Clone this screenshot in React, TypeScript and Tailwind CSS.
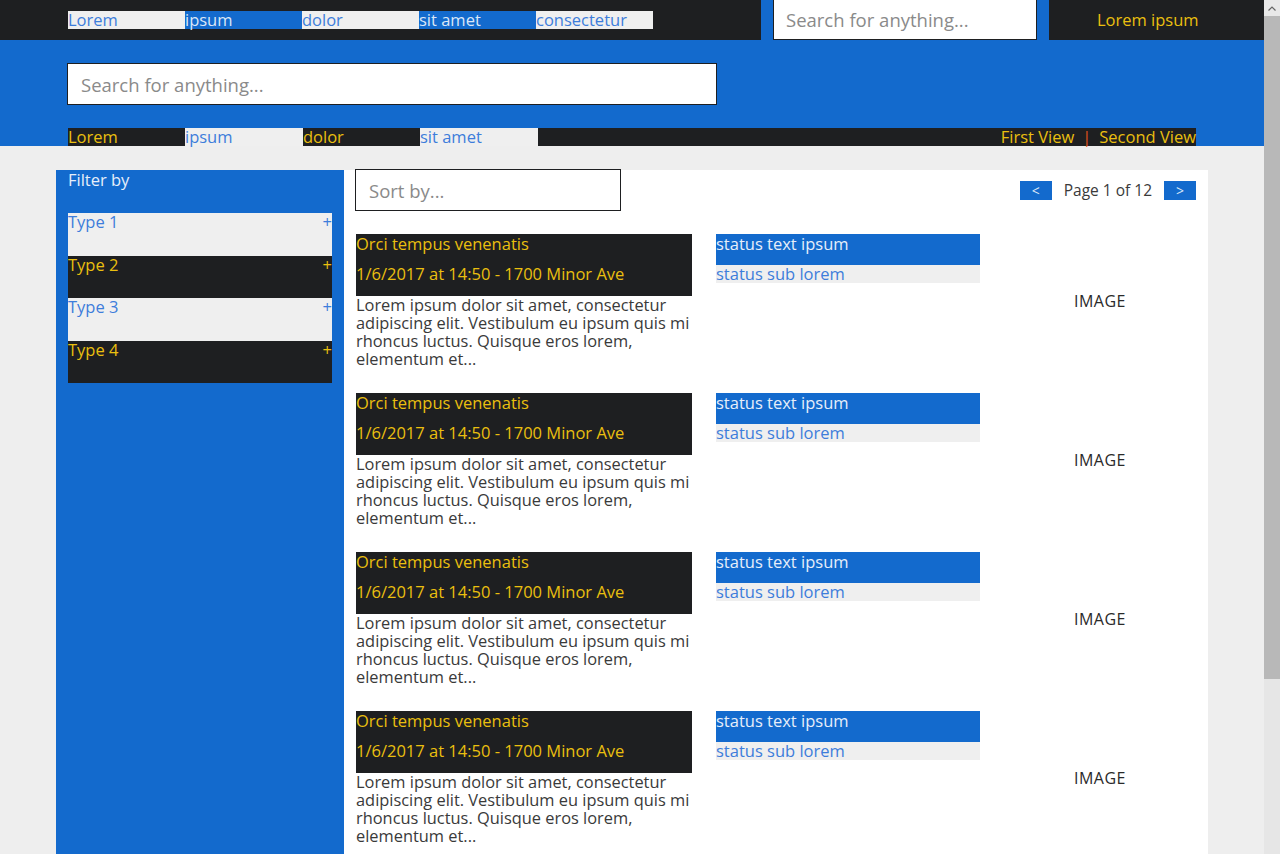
import React from "react";

const topNav = [
  { label: "Lorem", dark: false },
  { label: "ipsum", dark: true },
  { label: "dolor", dark: false },
  { label: "sit amet", dark: true },
  { label: "consectetur", dark: false },
];

const tabs = [
  { label: "Lorem", active: true },
  { label: "ipsum", active: false },
  { label: "dolor", active: true },
  { label: "sit amet", active: false },
];

const types = ["Type 1", "Type 2", "Type 3", "Type 4"];

const cards = [1, 2, 3, 4, 5];

function Card() {
  return (
    <div className="flex">
      <div className="w-[336px] shrink-0">
        <div className="h-[62px] bg-[#1e1f21] text-[#eabf0f]">
          <p className="text-[16.5px] leading-[20px]">Orci tempus venenatis</p>
          <p className="text-[16.5px] leading-[20px] mt-[10px]">1/6/2017 at 14:50 - 1700 Minor Ave</p>
        </div>
        <p className="text-[16.4px] leading-[18px] text-[#3a3a3a] whitespace-nowrap">
          Lorem ipsum dolor sit amet, consectetur
          <br />
          adipiscing elit. Vestibulum eu ipsum quis mi
          <br />
          rhoncus luctus. Quisque eros lorem,
          <br />
          elementum et...
        </p>
      </div>
      <div className="w-[264px] shrink-0 ml-6">
        <div className="h-[31px] bg-[#136acd] text-[#e6eefa] text-[16.5px] leading-[20px]">status text ipsum</div>
        <div className="h-[18px] bg-[#efefef] text-[#3d7ddb] text-[16.5px] leading-[18px]">status sub lorem</div>
      </div>
      <div className="flex-1 pl-6 flex items-center justify-center text-[16px] tracking-[0.5px] text-[#2a2a2a]">IMAGE</div>
    </div>
  );
}

function FakeScrollbar() {
  // the reference shows a classic browser scrollbar on the right edge
  return (
    <div aria-hidden className="fixed right-0 top-0 w-4 h-screen bg-[#e6e6e6] flex flex-col">
      <div className="h-4 bg-[#e8e8e8] flex items-center justify-center">
        <svg width="8" height="5" viewBox="0 0 8 5" fill="none" stroke="#666" strokeWidth="1.2">
          <path d="M0.5 4.5 L4 1 L7.5 4.5" />
        </svg>
      </div>
      <div className="h-[663px] bg-[#b8b8b8]" />
    </div>
  );
}

export default function App() {
  return (
    <div className="min-h-screen bg-[#eeeeee] font-['Open_Sans',sans-serif]">
      <div className="mr-4">
        {/* Header */}
        <div className="bg-[#136acd]">
          <div className="flex h-10">
            <div className="w-[761px] bg-[#1e1f21] pl-[68px] pt-[11px]">
              <div className="flex">
                {topNav.map((n) => (
                  <div
                    key={n.label}
                    className={
                      n.dark
                        ? "w-[117px] h-[18px] bg-[#136acd] text-[#dbe7f8] text-[16.5px] leading-[18px]"
                        : "w-[117px] h-[18px] bg-[#efefef] text-[#3d7ddb] text-[16.5px] leading-[18px]"
                    }
                  >
                    {n.label}
                  </div>
                ))}
              </div>
            </div>
            <div className="px-3">
              <input
                className="w-[264px] h-[41px] -mt-px bg-white border border-[#1e1f21] pl-[12px] text-[18.5px] outline-none placeholder:text-[#8a8a8a]"
                placeholder="Search for anything..."
              />
            </div>
            <div className="flex-1 bg-[#1e1f21] pl-12 flex items-center text-[16.5px] text-[#eabf0f]">Lorem ipsum</div>
          </div>
          <div className="pl-[67px] pt-[23px]">
            <input
              className="w-[650px] h-[42px] bg-white border border-[#1e1f21] pl-[13px] text-[18.5px] outline-none placeholder:text-[#8a8a8a]"
              placeholder="Search for anything..."
            />
          </div>
          <div className="mx-[68px] mt-[23px] h-[18px] bg-[#1e1f21] flex justify-between">
            <div className="flex">
              {tabs.map((t) => (
                <div
                  key={t.label}
                  className={
                    t.active
                      ? "w-[117px] h-[18px] text-[#eabf0f] text-[16.5px] leading-[18px]"
                      : "w-[118px] h-[18px] bg-[#efefef] text-[#3d7ddb] text-[16.5px] leading-[18px]"
                  }
                >
                  {t.label}
                </div>
              ))}
            </div>
            <div className="text-[16.5px] leading-[18px] text-[#eabf0f]">
              First View<span className="text-[#e0521c] mx-[8px]">|</span>Second View
            </div>
          </div>
        </div>

        {/* Body */}
        <div className="flex px-[56px] pt-6">
          <div className="w-[288px] shrink-0 bg-[#136acd] px-3 pb-[640px]">
            <p className="text-[16.5px] leading-[18px] text-[#e6eefa] pt-[1px]">Filter by</p>
            <div className="mt-[24px]">
              {types.map((t, i) => (
                <div
                  key={t}
                  className={
                    i % 2 === 0
                      ? "h-[42.5px] bg-[#efefef] text-[#3d7ddb] flex justify-between text-[16.5px] leading-[18px]"
                      : "h-[42.5px] bg-[#1e1f21] text-[#eabf0f] flex justify-between text-[16.5px] leading-[18px]"
                  }
                >
                  <span>{t}</span>
                  <span>+</span>
                </div>
              ))}
            </div>
          </div>
          <div className="flex-1 bg-white pl-[11px] pr-3">
            <div className="flex justify-between items-start">
              <input
                className="w-[266px] h-[42px] -mt-px bg-white border border-[#1e1f21] pl-[13px] text-[18.5px] outline-none placeholder:text-[#8a8a8a]"
                placeholder="Sort by..."
              />
              <div className="flex items-center gap-3 mt-[11px]">
                <div className="w-8 h-[19px] bg-[#136acd] text-[#dbe7f8] text-[14px] flex items-center justify-center">&lt;</div>
                <span className="text-[15.5px] leading-[19px] text-[#3a3a3a]">Page 1 of 12</span>
                <div className="w-8 h-[19px] bg-[#136acd] text-[#dbe7f8] text-[14px] flex items-center justify-center">&gt;</div>
              </div>
            </div>
            <div className="pl-px mt-[23px] flex flex-col gap-[25px]">
              {cards.map((c) => (
                <Card key={c} />
              ))}
            </div>
          </div>
        </div>
      </div>
      <FakeScrollbar />
    </div>
  );
}
